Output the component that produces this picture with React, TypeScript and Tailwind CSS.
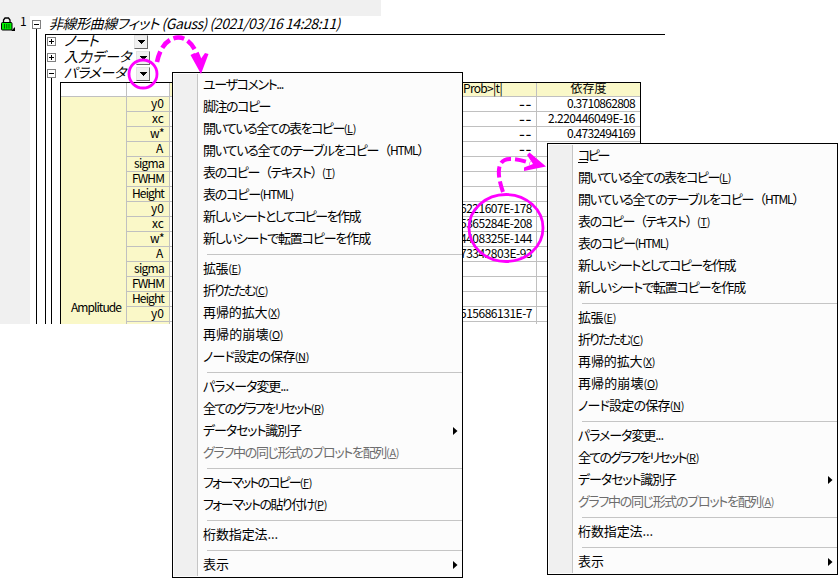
import { useLayoutEffect, useRef, useState, type ReactNode } from "react";

// Text whose tracking is adjusted so that it fills a given width.
// `fixed` is the number of trailing characters that keep their own tracking.
function Fit({
  w,
  fixed = 0,
  className = "",
  children,
}: {
  w: number;
  fixed?: number;
  className?: string;
  children: ReactNode;
}) {
  const ref = useRef<HTMLSpanElement>(null);
  const [spacing, setSpacing] = useState(0);
  useLayoutEffect(() => {
    const el = ref.current;
    if (!el) return;
    el.style.letterSpacing = "0px";
    const n = Math.max(1, (el.textContent ?? "").length - fixed);
    const s = (w - el.getBoundingClientRect().width) / n;
    el.style.letterSpacing = `${s}px`;
    setSpacing(s);
  }, [w, fixed]);
  return (
    <span ref={ref} className={`inline-block whitespace-nowrap ${className}`} style={{ letterSpacing: spacing }}>
      {children}
    </span>
  );
}

type Item = { t: string; w: number; k?: string; sub?: boolean; off?: boolean; u?: boolean } | null;

const copyItems: Item[] = [
  { t: "開いている全ての表をコピー", k: "L", w: 153 },
  { t: "開いている全てのテーブルをコピー（HTML）", w: 226 },
  { t: "表のコピー（テキスト）", k: "T", w: 132 },
  { t: "表のコピー(HTML)", w: 90 },
  { t: "新しいシートとしてコピーを作成", w: 157 },
  { t: "新しいシートで転置コピーを作成", w: 167 },
  null,
  { t: "拡張", k: "E", w: 38 },
  { t: "折りたたむ", k: "C", w: 65 },
  { t: "再帰的拡大", k: "X", w: 77 },
  { t: "再帰的崩壊", k: "O", w: 80 },
  { t: "ノード設定の保存", k: "N", w: 106 },
  null,
  { t: "パラメータ変更...", w: 85 },
  { t: "全てのグラフをリセット", k: "R", w: 121 },
  { t: "データセット識別子", w: 98, sub: true },
  { t: "グラフ中の同じ形式のプロットを配列", k: "A", w: 196, off: true },
  null,
];
const tail: Item[] = [{ t: "桁数指定法...", w: 75 }, null, { t: "表示", w: 26, sub: true }];

const nodeMenu: Item[] = [
  { t: "ユーザコメント...", w: 80 },
  { t: "脚注のコピー", w: 67 },
  ...copyItems,
  { t: "フォーマットのコピー", k: "F", w: 109 },
  { t: "フォーマットの貼り付け", k: "P", w: 124 },
  null,
  ...tail,
];
const cellMenu: Item[] = [{ t: "コピー", w: 30, u: true }, ...copyItems, ...tail];

// Latin runs are set smaller and full-width brackets keep their full advance.
function Mixed({ text }: { text: string }) {
  return (
    <>
      {text.split(/(\(?HTML\)?|[（）])/).map((part, i) =>
        part === "（" || part === "）" ? (
          <span key={i} className="[font-feature-settings:normal]">
            {part}
          </span>
        ) : part.includes("HTML") ? (
          <span key={i} className="text-[12px]">
            {part}
          </span>
        ) : (
          part
        ),
      )}
    </>
  );
}

function Menu({ items, className }: { items: Item[]; className: string }) {
  return (
    <div className={`absolute w-[291px] border border-black bg-[#fcfcfc] py-px ${className}`}>
      <div className="ml-px flex">
        <div className="w-[23px] shrink-0 bg-[#f0f0f0]" />
        <div className="flex-1 border-l border-[#c5c5c5]">
          {items.map((it, i) =>
            it === null ? (
              <div key={i} className="flex h-2 items-center pt-px pl-[9px]">
                <div className="h-px flex-1 bg-[#c5c5c5]" />
              </div>
            ) : (
              <div
                key={i}
                className={`flex h-[22px] items-center pr-1 pl-[5px] text-[13px] leading-[20px] ${it.off ? "text-[#6d6d6d]" : "text-black"}`}
              >
                <Fit w={it.w} fixed={it.k ? 3 : 0} className="mb-[2px] [font-feature-settings:'palt']">
                  {it.u ? (
                    <>
                      <span className="underline underline-offset-2">{it.t[0]}</span>
                      {it.t.slice(1)}
                    </>
                  ) : (
                    <Mixed text={it.t} />
                  )}
                  {it.k && (
                    <span className="text-[11px] tracking-[-0.4px]">
                      (<span className="underline underline-offset-1">{it.k}</span>)
                    </span>
                  )}
                </Fit>
                {it.sub && (
                  <svg className="ml-auto" width="5" height="8" viewBox="0 0 5 8">
                    <path d="M0 0L4.5 4L0 8Z" fill="#000" />
                  </svg>
                )}
              </div>
            ),
          )}
        </div>
      </div>
    </div>
  );
}

// Expand box; an open one has a stem that leads down to its children.
function Toggle({ open, className }: { open?: boolean; className: string }) {
  return (
    <svg className={`shrink-0 ${className}`} width="9" height="15" viewBox="0 0 9 15" shapeRendering="crispEdges">
      {open && <path d="M4.5 9v6" stroke="#000" />}
      <rect x=".5" y=".5" width="8" height="8" fill="#fff" stroke="#808080" />
      <path d={open ? "M2 4.5h5" : "M2 4.5h5M4.5 2v5"} stroke="#000" />
    </svg>
  );
}

function DropButton() {
  return (
    <div className="flex h-[14px] w-[14px] items-center justify-center border border-t-[#e3e3e3] border-r-[#696969] border-b-[#696969] border-l-[#e3e3e3] bg-[#f0f0f0]">
      <svg width="7" height="4" viewBox="0 0 7 4" shapeRendering="crispEdges">
        <path d="M0 0h7L3.5 4Z" fill="#000" />
      </svg>
    </div>
  );
}

const names = ["y0", "xc", "w*", "A", "sigma", "FWHM", "Height"];
const nameWidths = [13, 12, 14, 8, 30, 32, 32];
const dash = { t: "--", w: 13 };
const prob: Record<number, { t: string; w: number }> = {
  0: dash,
  1: dash,
  2: dash,
  3: dash,
  7: { t: "6221607E-178", w: 72 },
  8: { t: "5365284E-208", w: 72 },
  9: { t: "4408325E-144", w: 72 },
  10: { t: "73342803E-93", w: 72 },
  14: { t: "515686131E-7", w: 72 },
  15: { t: "28829996E-97", w: 72 },
};
const dependency: Record<number, { t: string; w: number }> = {
  0: { t: "0.3710862808", w: 68 },
  1: { t: "2.220446049E-16", w: 87 },
  2: { t: "0.4732494169", w: 68 },
};

function Sheet() {
  return (
    <div className="flex h-[242px] w-[581px] overflow-hidden border-t border-r border-l border-black text-[12px] leading-[11px]">
      <div className="w-[65px] shrink-0">
        <div className="h-[14px] border-b border-[#c0c0c0] bg-white" />
        <div className="flex h-[228px] items-end justify-end bg-[#faf8c8] pr-[5px] pb-[13px]">
          <Fit w={50}>Amplitude</Fit>
        </div>
      </div>
      <div className="w-[514px] shrink-0">
        <div className="flex h-[14px] border-b border-[#c0c0c0] bg-[#faf8c8] leading-[9px]">
          <div className="w-[44px] border-r border-l border-[#c0c0c0] bg-white" />
          <div className="w-[367px] border-r border-[#c0c0c0] pl-[293px]">
            <Fit w={39}>Prob&gt;|t|</Fit>
          </div>
          <div className="flex-1 text-center">
            <Fit w={36}>依存度</Fit>
          </div>
        </div>
        {Array.from({ length: 16 }, (_, i) => (
          <div key={i} className="flex h-[15px] border-b border-[#c0c0c0] text-right">
            <div className="w-[44px] border-r border-l border-[#c0c0c0] bg-[#faf8c8] pr-[5px]">
              <Fit w={nameWidths[i % 7]}>{names[i % 7]}</Fit>
            </div>
            <div className="w-[367px] border-r border-[#c0c0c0] pr-[4px]">
              {prob[i] && (
                <Fit w={prob[i].w} className={prob[i] === dash ? "text-[17px]" : ""}>
                  {prob[i].t}
                </Fit>
              )}
            </div>
            <div className="flex-1 pr-[5px]">
              {dependency[i] && <Fit w={dependency[i].w}>{dependency[i].t}</Fit>}
            </div>
          </div>
        ))}
      </div>
    </div>
  );
}

function Node({ label, w, open, gap }: { label: string; w: number; open?: boolean; gap: string }) {
  return (
    <div className="flex h-4 items-start">
      <Toggle open={open} className="mt-[3px]" />
      <Fit w={w} className="ml-[8px] text-[14px] leading-[13px] italic [font-feature-settings:'palt']">
        {label}
      </Fit>
      <div className={`mt-px ${gap}`}>
        <DropButton />
      </div>
    </div>
  );
}

export default function App() {
  return (
    <div className="relative h-[578px] w-[838px] overflow-hidden bg-white font-['Noto_Sans_CJK_JP',sans-serif] text-black">
      <div className="h-4 w-[381px] bg-[#f0f0f0]" />
      <div className="flex h-[308px]">
        <div className="flex w-[30px] shrink-0 items-start bg-[#f0f0f0]">
          <svg width="16" height="16" viewBox="0 0 16 16">
            <path d="M3.5 7V4L5 2H8.5L10 4V7" fill="none" stroke="#000" strokeWidth="1.3" />
            <rect x="1.5" y="6.5" width="10.5" height="7.5" rx="1" fill="#00f000" stroke="#000" />
            <path d="M4.5 8v4.500M6.750 8v4.500M9 8v4.500" stroke="#006000" />
            <path d="M15 11v4h-4Z" fill="#000" />
          </svg>
          <span className="ml-[4px] text-[12px] leading-[10px]">1</span>
        </div>
        <div className="w-[640px]">
          <div className="flex h-[18px] items-start pl-[2px]">
            <Toggle open className="mt-[4px]" />
            <Fit w={291} className="ml-[8px] text-[14px] leading-[14px] italic [font-feature-settings:'palt']">
              非線形曲線フィット (Gauss) (2021/03/16 14:28:11)
            </Fit>
          </div>
          <div className="ml-[6px] h-[290px] border-l border-black pl-[8px]">
            <div className="h-[290px] w-[620px] border-t border-l border-black">
              <div className="-mt-px pl-[1px]">
                <Node label="ノート" w={34} gap="ml-[36px]" />
                <Node label="入力データ" w={67} gap="ml-[5px]" />
                <Node label="パラメータ" w={62} gap="ml-[10px]" open />
              </div>
              <div className="ml-[5px] h-[242px] border-l border-black pl-[8px]">
                <Sheet />
              </div>
            </div>
          </div>
        </div>
      </div>
      <Menu items={nodeMenu} className="top-[72px] left-[172px]" />
      <Menu items={cellMenu} className="top-[143px] left-[547px]" />
      <svg className="absolute inset-0" width="838" height="578" fill="none" stroke="#ff00ff">
        <circle cx="143" cy="74" r="14" strokeWidth="2.8" />
        <path d="M157 62C160 47 168 38 178 37.500C188 37 196 48 200 62" strokeWidth="4.5" strokeDasharray="11 4" />
        <path d="M190.500 55L194.500 53L200 60L205 53L208.500 54L201 74Z" fill="#f0f" stroke="none" />
        <ellipse cx="506" cy="228" rx="37" ry="33.5" strokeWidth="2.8" />
        <path d="M503 192C497 175 496 159 510 159C517 159 524 161 530 163" strokeWidth="4" strokeDasharray="11 4" />
        <path d="M529.500 152.500L546 166.500L524 171L524 167.500L533 164L527 155Z" fill="#f0f" stroke="none" />
      </svg>
    </div>
  );
}
